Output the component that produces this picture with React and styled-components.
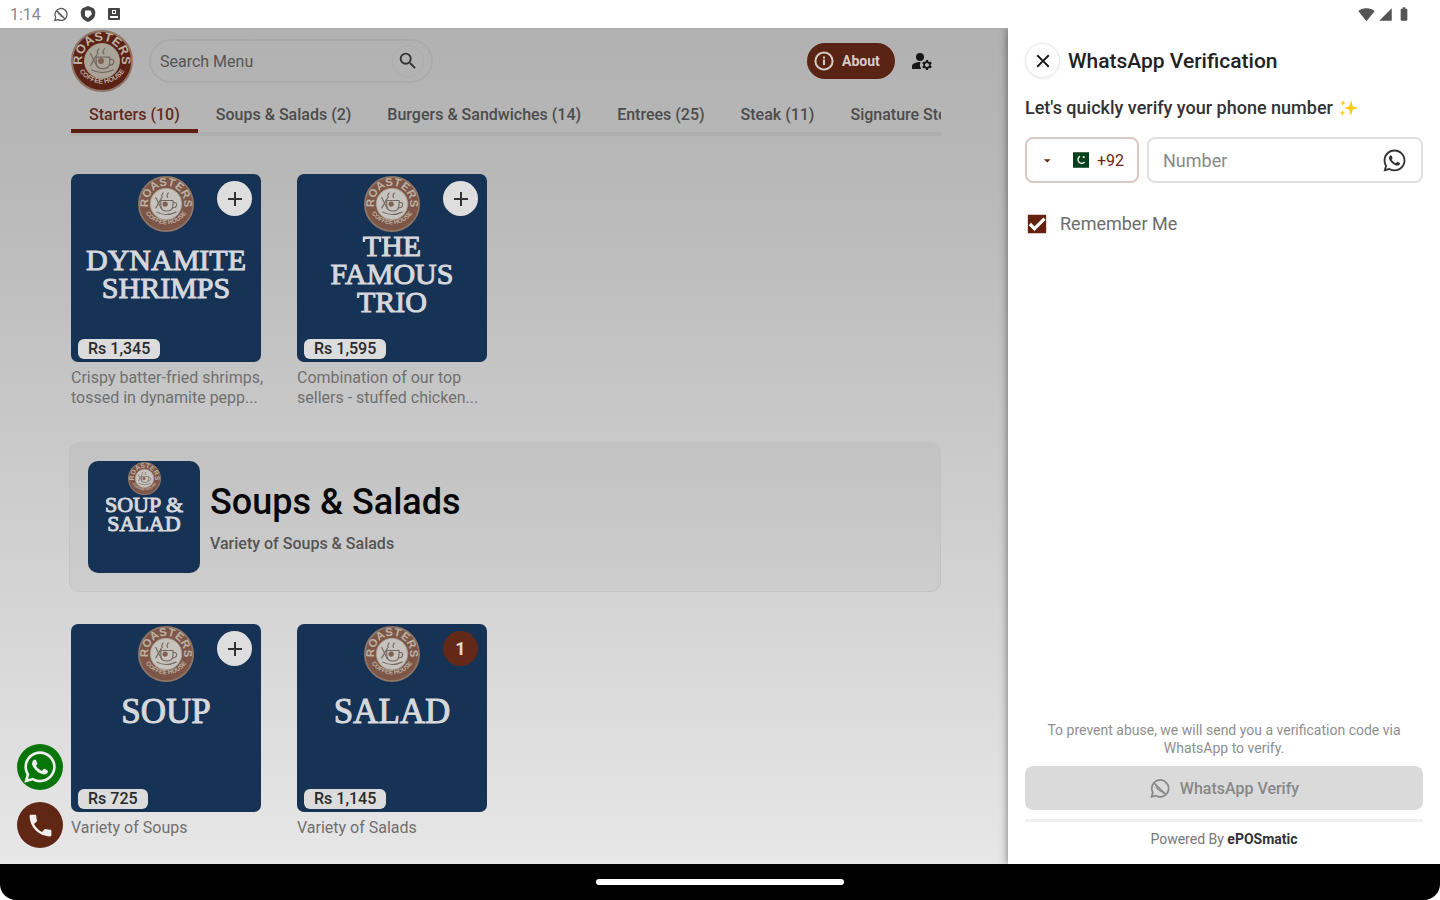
import styled, { createGlobalStyle } from 'styled-components';
import { FaWhatsapp } from 'react-icons/fa';
import {
  MdSearch,
  MdClose,
  MdAdd,
  MdPhone,
  MdArrowDropDown,
  MdManageAccounts,
  MdSignalWifi4Bar,
  MdSignalCellular4Bar,
  MdBatteryFull,
  MdCheck
} from 'react-icons/md';

const GlobalStyle = createGlobalStyle`
  * {
    box-sizing: border-box;
  }

  body {
    margin: 0;
    background: #fff;
    font-family: Roboto, "Liberation Sans", sans-serif;
  }

  h1, h2, p {
    margin: 0;
  }

  button, input, select {
    font-family: inherit;
  }
`;

const Screen = styled.div`
  display: flex;
  flex-direction: column;
  height: 100vh;
  overflow: hidden;
`;

const StatusBar = styled.header`
  display: flex;
  flex-shrink: 0;
  align-items: center;
  justify-content: space-between;
  height: 28px;
  padding: 0 28px 0 10px;
  color: #555;
  font-size: 16px;
`;

const StatusGroup = styled.div`
  display: flex;
  align-items: center;
  gap: ${({ $gap }) => $gap}px;
`;

const Clock = styled.span`
  color: #888;
`;

const Main = styled.div`
  display: flex;
  flex: 1;
  min-height: 0;
`;

const MenuPage = styled.main`
  flex: 1;
  min-width: 0;
  padding: 0 67px 0 71px;
  overflow: hidden;
  background: linear-gradient(#b1b1b1, #b9b9b9 20%, #d2d2d2 65%, #e7e7e7);
`;

const TopBar = styled.div`
  display: flex;
  align-items: center;
  height: 66px;
`;

const SearchBox = styled.label`
  display: flex;
  align-items: center;
  width: 284px;
  height: 44px;
  margin-left: 16px;
  padding: 0 7px 0 9px;
  border: 2px solid #aaa;
  border-radius: 22px;

  input {
    flex: 1;
    min-width: 0;
    padding: 0;
    border: 0;
    outline: 0;
    background: none;
    font-size: 16px;

    &::placeholder {
      color: #555;
      opacity: 1;
    }
  }
`;

const SearchButton = styled.button`
  display: flex;
  align-items: center;
  justify-content: center;
  width: 32px;
  height: 32px;
  padding: 0;
  border: 1px solid #adadad;
  border-radius: 50%;
  background: none;
  color: #333;
`;

const AboutButton = styled.button`
  display: flex;
  align-items: center;
  gap: 8px;
  width: 88px;
  height: 36px;
  margin-left: auto;
  padding: 0 7px;
  border: 0;
  border-radius: 18px;
  background: #5a2415;
  color: #d5ccc8;
  font-size: 14px;
  font-weight: 700;
`;

const AccountButton = styled.button`
  display: flex;
  margin: 0 7px 0 15px;
  padding: 0;
  border: 0;
  background: none;
  color: #161616;
`;

const Tabs = styled.nav`
  display: flex;
  height: 42px;
  overflow: hidden;
  box-shadow: inset 0 -4px #aeaeae;
`;

const Tab = styled.a`
  flex-shrink: 0;
  height: 39px;
  padding: 12px 18px 0;
  border-bottom: 4px solid ${({ $active }) => ($active ? '#5f1d10' : 'transparent')};
  color: ${({ $active }) => ($active ? '#5f2b20' : '#4c4c4c')};
  font-size: 16px;
  font-weight: 500;
  line-height: 18px;
  text-decoration: none;
  white-space: nowrap;
`;

const ItemGrid = styled.section`
  display: flex;
  gap: 36px;
  padding-top: ${({ $top }) => $top}px;
`;

const Item = styled.article`
  width: 190px;
`;

const Tile = styled.div`
  position: relative;
  display: flex;
  flex-direction: column;
  align-items: center;
  overflow: hidden;
  width: ${({ $small }) => ($small ? 112 : 190)}px;
  height: ${({ $small }) => ($small ? 112 : 188)}px;
  padding-top: ${({ $small }) => ($small ? 1 : 2)}px;
  border-radius: ${({ $small }) => ($small ? 10 : 7)}px;
  background: #163255;
  color: #d6d8dc;
`;

const TileTitle = styled.div`
  display: flex;
  flex-direction: column;
  justify-content: center;
  height: ${({ $height }) => $height}px;
  font-family: "Liberation Serif", serif;
  font-size: ${({ $size }) => $size}px;
  line-height: ${({ $small }) => ($small ? 19 : 28)}px;
  text-align: center;
  -webkit-text-stroke: 1px currentColor;
`;

const RoundButton = styled.button`
  position: absolute;
  top: 7px;
  right: 9px;
  display: flex;
  align-items: center;
  justify-content: center;
  width: 35px;
  height: 35px;
  padding: 0;
  border: 0;
  border-radius: 50%;
  background: ${({ $count }) => ($count ? '#632817' : '#dedede')};
  color: ${({ $count }) => ($count ? '#e4dbd8' : '#333')};
  font-size: 18px;
  font-weight: 700;
`;

const Price = styled.span`
  position: absolute;
  bottom: 3px;
  left: 7px;
  height: 20px;
  padding: 0 10px;
  border-radius: 6px;
  background: #dcdcdc;
  color: #2a2a2a;
  font-size: 16px;
  font-weight: 500;
  line-height: 20px;
`;

const Description = styled.p`
  padding-top: 6px;
  color: #707070;
  font-size: 16px;
  line-height: 20px;
  white-space: nowrap;
`;

const CategoryCard = styled.section`
  display: flex;
  align-items: center;
  gap: 10px;
  height: 150px;
  margin: 34px 0 0 -2px;
  padding: 0 18px;
  border: 1px solid #c3c3c3;
  border-radius: 10px;
  background: linear-gradient(#c2c2c2, #cdcdcd);

  h2 {
    color: #080808;
    font-size: 36px;
    font-weight: 500;
    line-height: 44px;
  }

  p {
    padding-top: 10px;
    color: #555;
    font-size: 16px;
    font-weight: 500;
    line-height: 20px;
  }
`;

const FloatingActions = styled.div`
  position: fixed;
  bottom: 52px;
  left: 17px;
  display: flex;
  flex-direction: column;
  gap: 12px;
`;

const ContactLink = styled.a`
  display: flex;
  align-items: center;
  justify-content: center;
  width: 46px;
  height: 46px;
  border-radius: 50%;
  background: ${({ $color }) => $color};
  color: #f0f0f0;
`;

const Drawer = styled.aside`
  position: relative;
  display: flex;
  flex-direction: column;
  width: 30%;
  min-width: 360px;
  padding: 15px 17px 16px;
  background: #fff;
  box-shadow: 0 0 8px rgba(0, 0, 0, 0.5);
  clip-path: inset(0 0 0 -10px);
`;

const DrawerHead = styled.div`
  display: flex;
  align-items: center;
  gap: 8px;

  h1 {
    color: #222;
    font-size: 21px;
    font-weight: 500;
  }
`;

const CloseButton = styled.button`
  display: flex;
  align-items: center;
  justify-content: center;
  width: 35px;
  height: 35px;
  padding: 0;
  border: 1px solid #e9e9e9;
  border-radius: 50%;
  background: #fff;
  box-shadow: 0 1px 3px rgba(0, 0, 0, 0.08);
  color: #111;
`;

const Intro = styled.p`
  display: flex;
  align-items: center;
  gap: 6px;
  padding: 20px 0 19px;
  color: #333;
  font-size: 18px;
  font-weight: 500;
  line-height: 20px;
  white-space: nowrap;
`;

const PhoneRow = styled.div`
  display: flex;
  gap: 8px;
`;

const CountryField = styled.label`
  display: flex;
  align-items: center;
  width: 114px;
  height: 46px;
  padding: 0 12px;
  border: 2px solid #d9c8c5;
  border-radius: 8px;
  color: #6b2418;

  .flag {
    margin: 0 8px 0 17px;
  }

  select {
    padding: 0;
    border: 0;
    outline: 0;
    appearance: none;
    background: none;
    color: inherit;
    font-size: 16px;
  }
`;

const NumberField = styled.label`
  display: flex;
  flex: 1;
  align-items: center;
  min-width: 0;
  height: 46px;
  padding: 0 14px;
  border: 2px solid #e0e0e0;
  border-radius: 8px;
  color: #333;

  input {
    flex: 1;
    min-width: 0;
    padding: 0;
    border: 0;
    outline: 0;
    font-size: 18px;

    &::placeholder {
      color: #888;
      opacity: 1;
    }
  }
`;

const Remember = styled.label`
  display: flex;
  align-items: center;
  gap: 13px;
  padding-top: 30px;
  padding-left: 2px;
  color: #6c6c6c;
  font-size: 18px;
  line-height: 22px;
`;

const TickBox = styled.span`
  display: grid;
  width: 20px;
  height: 20px;

  input, svg {
    grid-area: 1 / 1;
    width: 20px;
    height: 20px;
    margin: 0;
  }

  input {
    appearance: none;
    border-radius: 2px;
    background: #66200f;
  }

  svg {
    z-index: 1;
    color: #fff;
    stroke: currentColor;
    stroke-width: 2px;
    pointer-events: none;
  }
`;

const DrawerFoot = styled.footer`
  display: flex;
  flex-direction: column;
  margin-top: auto;
  text-align: center;
`;

const Note = styled.p`
  padding: 0 20px 9px;
  color: #8f8f8f;
  font-size: 14px;
  line-height: 18px;
`;

const VerifyButton = styled.button`
  display: flex;
  align-items: center;
  justify-content: center;
  gap: 10px;
  height: 44px;
  border: 0;
  border-radius: 8px;
  background: #dadada;
  color: #888;
  font-size: 16px;
  font-weight: 500;
`;

const Powered = styled.p`
  margin-top: 9px;
  padding-top: 8px;
  border-top: 3px solid #f0f0f0;
  color: #777;
  font-size: 14px;
  line-height: 18px;

  b {
    color: #333;
  }
`;

const NavigationBar = styled.div`
  display: flex;
  flex-shrink: 0;
  align-items: center;
  justify-content: center;
  height: 36px;
  border-radius: 0 0 16px 16px;
  background: #000;

  span {
    width: 248px;
    height: 6px;
    border-radius: 3px;
    background: #fff;
  }
`;

const Logo = ({ size, id, ring = '#7d5648', face = '#c6c2be' }) => (
  <svg width={size} height={size} viewBox="0 0 64 64" role="img" aria-label="Roasters">
    <defs>
      <path id={`${id}-top`} d="M12.500 38a20.500 20.500 0 1 1 39 0" />
      <path id={`${id}-bottom`} d="M5 33a27.500 27.500 0 0 0 54 0" />
    </defs>
    <circle cx="32" cy="32" r="31" fill={ring} stroke="#8f7667" strokeWidth="2" />
    <circle cx="32" cy="32" r="18" fill={face} stroke="#aaa092" strokeWidth="1" />
    <g fill="#bdb1a3" fontFamily="Liberation Sans, sans-serif" fontWeight="700" textAnchor="middle">
      <text fontSize="13">
        <textPath href={`#${id}-top`} startOffset="50%">ROASTERS</textPath>
      </text>
      <text fontSize="7">
        <textPath href={`#${id}-bottom`} startOffset="50%">COFFEE HOUSE</textPath>
      </text>
    </g>
    <g fill="none" stroke="#75695f" strokeWidth="1.3">
      <path d="M26 28h14v5q0 7-7 7t-7-7zM40 30q5 0 4 4-1 3-5 2" />
      <path d="M20 24l7 14M27 25l-7 12M21 41q11 6 23 0M28 25q-2-3 1-6M34 25q-2-3 1-6" />
    </g>
    <circle cx="31" cy="32" r="3" fill="#815f52" />
  </svg>
);

const InfoIcon = () => (
  <svg width="20" height="20" viewBox="0 0 20 20" fill="none" stroke="currentColor" strokeWidth="2">
    <circle cx="10" cy="10" r="8.6" />
    <path d="M10 8.6v5.4M10 5.4v2" />
  </svg>
);

const BlockedChatIcon = ({ size }) => (
  <svg width={size} height={size} viewBox="0 0 24 24" fill="none" stroke="currentColor" strokeWidth="2">
    <path d="M3 21.5l1.4-5A9.6 9.6 0 1 1 8 20.2zM6 6l12.5 12.5" />
    <path d="M8 7.5c-1 3 4.500 9 8.500 8.500" strokeWidth="1.4" />
  </svg>
);

const ShieldIcon = () => (
  <svg width="16" height="16" viewBox="0 0 16 16">
    <path fill="#444" d="M8 0l6 2.500q2 3 1 7-1 4-7 6.500-6-2.500-7-6.500-1-4 1-7z" />
    <path fill="#fff" d="M5 4.500h5.500L12 8l-4 4-3-2z" />
  </svg>
);

const AppIcon = () => (
  <svg width="12" height="12" viewBox="0 0 12 12">
    <rect width="12" height="12" rx="1" fill="#444" />
    <path fill="#fff" d="M4 2h4v4H4zM2 8h8v2H2z" />
    <path fill="#444" d="M5 3h2v2H5z" />
  </svg>
);

const Flag = () => (
  <svg className="flag" width="17" height="16" viewBox="0 0 17 16">
    <path fill="#07401f" d="M0 0h17v16H0z" />
    <path fill="none" stroke="#dce8df" strokeWidth="1.6" d="M7 4q-3 3-1 6 3 3 6 0" />
    <path fill="#dce8df" d="M10 4h2v2h-2z" />
  </svg>
);

const Sparkles = () => (
  <svg width="19" height="18" viewBox="0 0 19 18" fill="#fbc91c">
    <path d="M12 1l1.700 6.300L19 9l-5.300 1.700L12 17l-1.700-6.300L5 9l5.300-1.700zM4 1l.8 2.200L7 4l-2.200.8L4 7l-.8-2.200L1 4l2.200-.8zM3.500 11l.8 2.200 2.200.8-2.200.8-.8 2.200-.8-2.200L.5 14l2.200-.8z" />
  </svg>
);

const categories = [
  'Starters (10)',
  'Soups & Salads (2)',
  'Burgers & Sandwiches (14)',
  'Entrees (25)',
  'Steak (11)',
  'Signature Steaks'
];

const starters = [
  {
    id: 'shrimps',
    title: ['DYNAMITE', 'SHRIMPS'],
    price: 'Rs 1,345',
    text: ['Crispy batter-fried shrimps,', 'tossed in dynamite pepp...']
  },
  {
    id: 'trio',
    title: ['THE', 'FAMOUS', 'TRIO'],
    price: 'Rs 1,595',
    text: ['Combination of our top', 'sellers - stuffed chicken...']
  }
];

const soups = [
  { id: 'soup', title: ['SOUP'], price: 'Rs 725', text: ['Variety of Soups'] },
  { id: 'salad', title: ['SALAD'], price: 'Rs 1,145', text: ['Variety of Salads'], count: 1 }
];

const MenuItem = ({ item }) => {
  const single = item.title.length === 1;

  return (
    <Item>
      <Tile>
        <Logo size={56} id={item.id} />
        <TileTitle $height={single ? 60 : 84} $size={single ? 35 : 30}>
          {item.title.map((line) => (
            <span key={line}>{line}</span>
          ))}
        </TileTitle>
        <RoundButton $count={item.count} aria-label={item.count ? undefined : 'Add'}>
          {item.count || <MdAdd size={24} />}
        </RoundButton>
        <Price>{item.price}</Price>
      </Tile>
      <Description>
        {item.text.map((line) => (
          <span key={line}>
            {line}
            <br />
          </span>
        ))}
      </Description>
    </Item>
  );
};

const App = () => (
  <Screen>
    <GlobalStyle />
    <StatusBar>
      <StatusGroup $gap={12}>
        <Clock>1:14</Clock>
        <BlockedChatIcon size={15} />
        <ShieldIcon />
        <AppIcon />
      </StatusGroup>
      <StatusGroup $gap={3}>
        <MdSignalWifi4Bar size={17} />
        <MdSignalCellular4Bar size={15} />
        <MdBatteryFull size={16} />
      </StatusGroup>
    </StatusBar>

    <Main>
      <MenuPage>
        <TopBar>
          <Logo size={62} id="brand" ring="#5c2216" face="#aaa499" />
          <SearchBox>
            <input type="text" placeholder="Search Menu" aria-label="Search Menu" />
            <SearchButton aria-label="Search">
              <MdSearch size={22} />
            </SearchButton>
          </SearchBox>
          <AboutButton>
            <InfoIcon />
            About
          </AboutButton>
          <AccountButton aria-label="Account">
            <MdManageAccounts size={24} />
          </AccountButton>
        </TopBar>

        <Tabs>
          {categories.map((name, i) => (
            <Tab key={name} href="#" $active={i === 0}>{name}</Tab>
          ))}
        </Tabs>

        <ItemGrid $top={38}>
          {starters.map((item) => <MenuItem key={item.id} item={item} />)}
        </ItemGrid>

        <CategoryCard>
          <Tile $small>
            <Logo size={33} id="category" />
            <TileTitle $small $size={22} $height={38}>
              <span>SOUP &amp;</span>
              <span>SALAD</span>
            </TileTitle>
          </Tile>
          <div>
            <h2>Soups &amp; Salads</h2>
            <p>Variety of Soups &amp; Salads</p>
          </div>
        </CategoryCard>

        <ItemGrid $top={32}>
          {soups.map((item) => <MenuItem key={item.id} item={item} />)}
        </ItemGrid>
      </MenuPage>

      <Drawer>
        <DrawerHead>
          <CloseButton aria-label="Close">
            <MdClose size={22} />
          </CloseButton>
          <h1>WhatsApp Verification</h1>
        </DrawerHead>
        <Intro>
          Let's quickly verify your phone number
          <Sparkles />
        </Intro>
        <PhoneRow>
          <CountryField>
            <MdArrowDropDown size={17} />
            <Flag />
            <select aria-label="Country code" defaultValue="+92">
              <option>+92</option>
            </select>
          </CountryField>
          <NumberField>
            <input type="tel" placeholder="Number" aria-label="Number" />
            <FaWhatsapp size={25} />
          </NumberField>
        </PhoneRow>
        <Remember>
          <TickBox>
            <input type="checkbox" defaultChecked />
            <MdCheck />
          </TickBox>
          Remember Me
        </Remember>

        <DrawerFoot>
          <Note>To prevent abuse, we will send you a verification code via WhatsApp to verify.</Note>
          <VerifyButton disabled>
            <BlockedChatIcon size={21} />
            WhatsApp Verify
          </VerifyButton>
          <Powered>Powered By <b>ePOSmatic</b></Powered>
        </DrawerFoot>
      </Drawer>
    </Main>

    <FloatingActions>
      <ContactLink href="#" $color="#087508" aria-label="WhatsApp">
        <FaWhatsapp size={36} />
      </ContactLink>
      <ContactLink href="#" $color="#602715" aria-label="Call">
        <MdPhone size={29} />
      </ContactLink>
    </FloatingActions>

    <NavigationBar>
      <span />
    </NavigationBar>
  </Screen>
);

export default App;
